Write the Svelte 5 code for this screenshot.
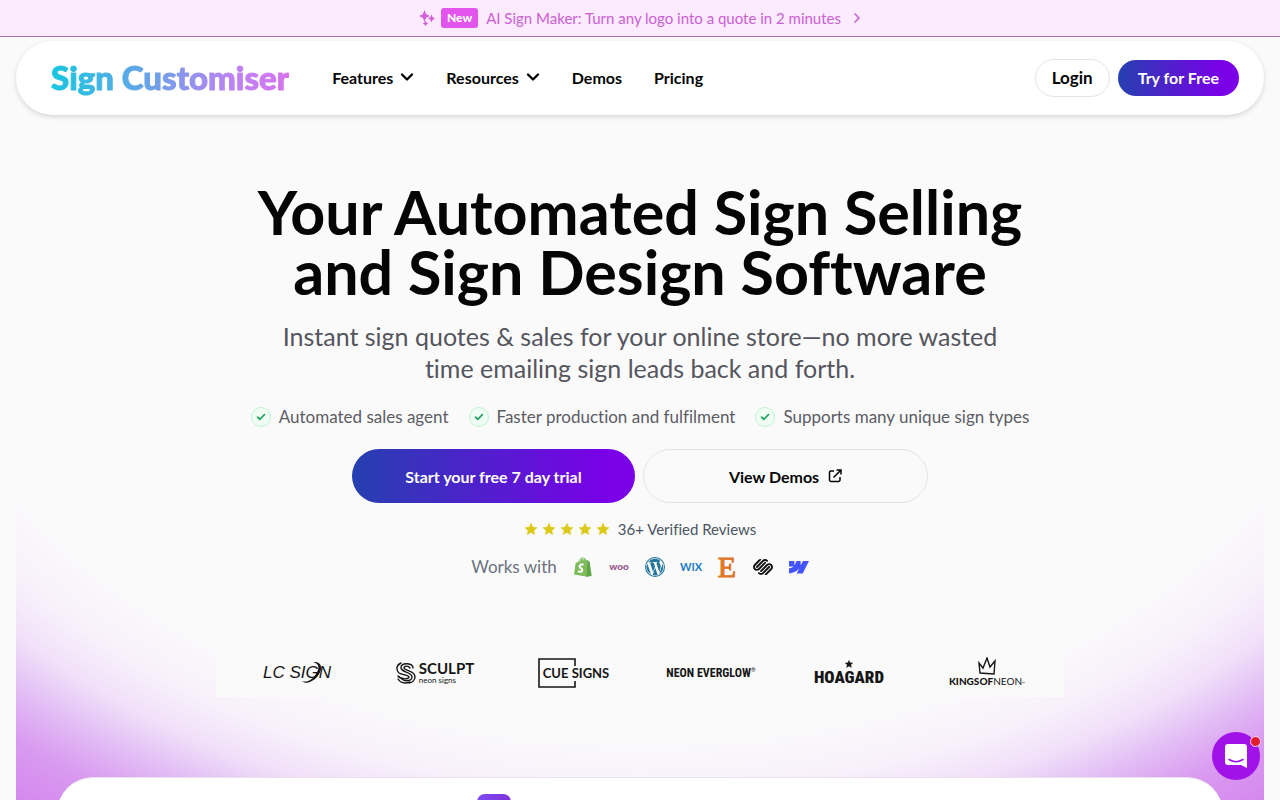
<script lang="ts">
  const menu = [
    { label: 'Features', href: '#features', dropdown: true },
    { label: 'Resources', href: '#resources', dropdown: true },
    { label: 'Demos', href: '#demos', dropdown: false },
    { label: 'Pricing', href: '#pricing', dropdown: false },
  ];

  const benefits = [
    'Automated sales agent',
    'Faster production and fulfilment',
    'Supports many unique sign types',
  ];

  const stars = [1, 2, 3, 4, 5];
</script>

<div class="page">
  <a class="announcement" href="#sign-maker">
    <svg class="sparkles" width="16" height="16" viewBox="0 0 16 16" aria-hidden="true">
      <path d="M5.500 0 L7.200 4.200 L11 6 L7.200 7.800 L5.500 12 L3.800 7.800 L0 6 L3.800 4.200Z" />
      <path d="M12.500 4.500 L13.700 7.300 L16 8.500 L13.700 9.700 L12.500 12.500 L11.300 9.700 L9 8.500 L11.300 7.300Z" />
      <path d="M6.500 10.800 L7.500 12.500 L9.200 13.500 L7.500 14.500 L6.500 16 L5.500 14.500 L3.800 13.500 L5.500 12.500Z" />
    </svg>
    <span class="new">New</span>
    <span class="announcement-text">AI Sign Maker: Turn any logo into a quote in 2 minutes</span>
    <svg class="arrow" width="8" height="12" viewBox="0 0 8 12" aria-hidden="true">
      <path d="M1.500 1.500 L6 6 L1.500 10.500" />
    </svg>
  </a>

  <header class="header">
    <a class="logo" href="#home">Sign Customiser</a>
    <nav class="nav" aria-label="Main">
      {#each menu as item}
        {#if item.dropdown}
          <button class="nav-item" type="button" aria-haspopup="true">
            {item.label}
            <svg width="14" height="10" viewBox="0 0 14 10" aria-hidden="true">
              <path d="M2 2.500 L7 7.500 L12 2.500" />
            </svg>
          </button>
        {:else}
          <a class="nav-item" href={item.href}>{item.label}</a>
        {/if}
      {/each}
    </nav>
    <div class="account">
      <a class="login" href="#login">Login</a>
      <a class="try" href="#trial">Try for Free</a>
    </div>
  </header>

  <div class="backdrop">
    <main class="hero">
      <h1>Your Automated Sign Selling<br />and Sign Design Software</h1>
      <p class="lead">Instant sign quotes & sales for your online store—no more wasted<br />time emailing sign leads back and forth.</p>

      <ul class="benefits">
        {#each benefits as benefit}
          <li>
            <span class="tick">
              <svg width="10" height="8" viewBox="0 0 10 8" aria-hidden="true">
                <path d="M1.500 4.200 L3.800 6.400 L8.500 1.500" />
              </svg>
            </span>
            {benefit}
          </li>
        {/each}
      </ul>

      <div class="actions">
        <a class="cta primary" href="#trial">Start your free 7 day trial</a>
        <a class="cta" href="#demos">
          View Demos
          <svg width="14" height="14" viewBox="0 0 14 14" aria-hidden="true">
            <path d="M6 2 H3 A1.500 1.500 0 0 0 1.500 3.500 V11 A1.500 1.500 0 0 0 3 12.500 H10.500 A1.500 1.500 0 0 0 12 11 V8 M8.500 1 H13 V5.500 M13 1 L5.500 8.500" />
          </svg>
        </a>
      </div>

      <div class="reviews">
        <div class="stars" role="img" aria-label="5 stars">
          {#each stars as star (star)}
            <svg width="14" height="14" viewBox="0 0 20 20">
              <path d="M10 1 L12.800 7 L19.400 7.700 L14.500 12.100 L15.900 18.600 L10 15.300 L4.100 18.600 L5.500 12.100 L0.600 7.700 L7.200 7Z" />
            </svg>
          {/each}
        </div>
        <span>36+ Verified Reviews</span>
      </div>

      <div class="works">
        <span>Works with</span>
        <div class="platforms">
          <svg viewBox="0 0 20 20" role="img" aria-label="Shopify">
            <path fill="#7dbb5b" d="M2.700 5.700 L5.300 4.900 C5.800 2.300 7.700 0 9.700 0.200 C10.300 0.200 10.700 0.500 11 1 C12.200 0.800 12.800 2 13.100 2.900 L14.600 3 L14.700 19.800 L1 17.500Z" />
            <path fill="#5fa548" d="M14.500 3 L16.600 4.800 L18.700 18.700 L13.500 20Z" />
            <path fill="none" stroke="#f9fafb" stroke-width="0.800" d="M6.500 4.500 C7 2.500 8.500 0.900 9.600 1 C10.600 1.200 10.800 2.400 10.800 3.400" />
            <path fill="none" stroke="#fff" stroke-width="2" d="M10.500 7.700 C8.500 6.900 6.700 7.700 6.600 9.200 C6.500 11.100 9.600 11.100 9.300 13.300 C9 15.200 6.700 15.200 5 14.100" />
          </svg>
          <svg viewBox="0 0 20 20" role="img" aria-label="Woo">
            <text class="woo" x="10" y="13" text-anchor="middle">woo</text>
          </svg>
          <svg viewBox="0 0 20 20" role="img" aria-label="WordPress">
            <path fill="#21759b" d="M10 0 A10 10 0 1 0 10 20 A10 10 0 1 0 10 0Z M10 1 A9 9 0 1 1 10 19 A9 9 0 1 1 10 1Z" fill-rule="evenodd" />
            <path fill="#21759b" d="M2.200 6.500 L6 17.200 A8.200 8.200 0 0 1 2.200 6.500Z M3 5.600 A8.300 8.300 0 0 1 15.600 4 C14.400 4.100 14 5.300 14.700 6.500 C15.600 8 16 9.300 15.400 11.400 L14.300 14.800 L11.300 6 L12.300 5.800 V5.100 H7.700 V5.800 L8.700 6 L10 9.600 L8.100 15 L5.100 6 L6.200 5.800 V5.100Z M10.100 10.800 L12.700 18 A8.300 8.300 0 0 1 7.800 18Z M17.400 6.200 A8.200 8.200 0 0 1 14.100 17.200 L16.700 9.800 C17.200 8.400 17.500 7.300 17.400 6.200Z" />
          </svg>
          <svg viewBox="0 0 20 20" role="img" aria-label="Wix">
            <text class="wix" x="10" y="14" text-anchor="middle">WIX</text>
          </svg>
          <svg viewBox="0 0 20 20" role="img" aria-label="Etsy">
            <text class="etsy" x="10" y="20" text-anchor="middle">E</text>
          </svg>
          <svg viewBox="0 0 24 24" role="img" aria-label="Squarespace">
            <path fill="#111" d="M22.655 8.719c-1.802-1.801-4.726-1.801-6.564 0l-7.351 7.350c-.45.45-.45 1.200 0 1.650.45.449 1.200.449 1.650 0l7.351-7.351c.899-.899 2.362-.899 3.264 0 .9.9.9 2.364 0 3.264l-7.239 7.239c.9.899 2.362.899 3.263 0l5.589-5.589c1.836-1.838 1.836-4.763.037-6.563zm-2.475 2.437c-.451-.45-1.201-.45-1.650 0l-7.354 7.389c-.9.899-2.361.899-3.262 0-.45-.45-1.200-.45-1.650 0s-.45 1.200 0 1.649c1.801 1.801 4.726 1.801 6.564 0l7.351-7.350c.449-.487.449-1.239.001-1.688zm-2.439-7.350c-1.801-1.801-4.726-1.801-6.564 0l-7.351 7.351c-.45.449-.45 1.199 0 1.649s1.200.45 1.650 0l7.395-7.351c.9-.899 2.371-.899 3.270 0 .451.45 1.201.45 1.650 0 .421-.487.421-1.199-.05-1.649zm-2.475 2.475c-.45-.449-1.200-.449-1.650 0l-7.351 7.351c-.899.9-2.363.9-3.265 0-.9-.9-.9-2.364 0-3.264l7.239-7.239c-.9-.9-2.362-.9-3.263 0L1.350 8.719c-1.800 1.800-1.800 4.725 0 6.563 1.801 1.801 4.725 1.801 6.564 0l7.350-7.351c.451-.488.451-1.238.002-1.650z" />
          </svg>
          <svg viewBox="0 0 20 20" role="img" aria-label="Webflow">
            <path fill="#4353ff" d="M20 4 L13.700 16.400 H7.700 L10.300 11.300 C8.100 14.200 4.800 16.100 0 16.400 V11.200 C3 11 4.700 9.400 4.700 9.400 H0 V4 H5.400 V8.400 L7.600 4 H11.600 V8.400 L13.900 4Z" />
          </svg>
        </div>
      </div>

      <div class="customers">
        <div class="lc">
          <svg width="68" height="24" viewBox="0 0 68 24" aria-hidden="true">
            <path d="M50 1 C61 0 60 11 52 18 C47 22 42 23 39 20 C44 22 49 19 53 13 C57 6 56 3 50 1Z" />
          </svg>
          <span>LC SIGN</span>
        </div>
        <div class="sculpt">
          <svg width="20" height="22" viewBox="0 0 20 22" aria-hidden="true">
            <path d="M17 6 C17 1 6 0 5 5 C4 11 16 9 16 15 C16 19 9 20 6 17" />
            <path d="M14 6 C12 3 8 4 8 6 C8 9 19 8 19 15 C19 18 16 21 13 21" />
            <path d="M5 1 C0 3 0 8 3 11 C6 13 13 13 13 15 C12 18 4 17 2 14 M2 17 C5 22 11 21 14 20" />
          </svg>
          <div class="sculpt-name"><b>SCULPT</b><span>neon signs</span></div>
        </div>
        <div class="cue">
          <svg width="70" height="30" viewBox="0 0 70 30" aria-hidden="true">
            <path d="M37 8 V1 H1 V29 H37 V23" />
          </svg>
          <b>CUE SIGNS</b>
        </div>
        <div class="everglow">NEON EVERGLOW<sup>®</sup></div>
        <div class="hoagard">
          <svg width="8" height="8" viewBox="0 0 20 20" aria-hidden="true">
            <path d="M10 1 L12.800 7 L19.400 7.700 L14.500 12.100 L15.900 18.600 L10 15.300 L4.100 18.600 L5.500 12.100 L0.600 7.700 L7.200 7Z" />
          </svg>
          <b>HOAGARD</b>
        </div>
        <div class="kings">
          <svg width="18" height="18" viewBox="0 0 18 18" aria-hidden="true">
            <path d="M2 16 L1 6 L5 11 L9 1 L12 10 L17 4 L16 17 Z" />
          </svg>
          <div><b>KINGSOF</b>NEON<small>™</small></div>
        </div>
      </div>
    </main>

    <section class="preview" aria-label="Product preview">
      <div class="preview-icon"></div>
    </section>
  </div>

  <button class="chat" type="button" aria-label="Open chat">
    <svg width="22" height="24" viewBox="0 0 22 24" aria-hidden="true">
      <path fill="#fff" d="M3 0 H19 Q22 0 22 3 V24 L16 21 H3 Q0 21 0 18 V3 Q0 0 3 0Z" />
      <path fill="none" stroke="#a012e8" stroke-width="1.600" stroke-linecap="round" d="M4 15.500 Q11 20 18 15.500" />
    </svg>
    <span class="unread"></span>
  </button>
</div>

<style>
  :global(body) {
    background: #fafafa;
    overflow: hidden;
  }

  .page {
    height: 100vh;
    min-height: 600px;
    display: flex;
    flex-direction: column;
    overflow: hidden;
    font-family: Lato, 'Open Sans', sans-serif;
    font-variant-ligatures: no-common-ligatures;
    color: #050505;
    background: #fafafa;
  }

  a {
    color: inherit;
    text-decoration: none;
  }

  button {
    font: inherit;
    color: inherit;
    border: 0;
    padding: 0;
    background: none;
    cursor: pointer;
  }

  svg {
    display: block;
    flex-shrink: 0;
  }

  .announcement {
    display: flex;
    align-items: center;
    justify-content: center;
    height: 36px;
    flex-shrink: 0;
    border-bottom: 1px solid #b36bbf;
    background: #fceaff;
    color: #ca61d3;
    font-size: 15px;
    line-height: 20px;
  }

  .sparkles {
    fill: #d45fdc;
    margin-right: 6px;
  }

  .new {
    padding: 0 6px;
    border-radius: 3px;
    background: #e354ec;
    color: #fff;
    font-size: 12px;
    font-weight: 900;
  }

  .announcement-text {
    margin: 0 12px 0 8px;
  }

  .arrow {
    fill: none;
    stroke: #ca61d3;
    stroke-width: 1.5;
  }

  .header {
    position: relative;
    z-index: 1;
    display: flex;
    align-items: center;
    flex-shrink: 0;
    height: 74px;
    margin: 4px 16px 0;
    padding: 0 25px 0 35px;
    box-sizing: border-box;
    border-radius: 37px;
    background: #fff;
    box-shadow: 0 2px 5px #00000026;
  }

  .logo {
    padding-bottom: 2px;
    font-family: 'Lato Black', Lato, sans-serif;
    font-size: 33px;
    font-weight: 900;
    line-height: 44px;
    background: linear-gradient(90deg, #17c7df, #719fe9 45%, #ba83f4 75%, #d774ef);
    background-clip: text;
    color: transparent;
    -webkit-text-stroke: 1px transparent;
  }

  .nav {
    display: flex;
    gap: 32px;
    margin-left: 43px;
    padding-bottom: 2px;
  }

  .nav-item {
    display: flex;
    align-items: center;
    gap: 7px;
    font-size: 16px;
    font-weight: 700;
  }

  .nav-item svg {
    fill: none;
    stroke: #050505;
    stroke-width: 2.4;
    stroke-linecap: round;
    stroke-linejoin: round;
  }

  .account {
    display: flex;
    align-items: center;
    gap: 8px;
    margin-left: auto;
    font-size: 16px;
    font-weight: 700;
    line-height: 36px;
  }

  .login {
    padding: 0 16px;
    border: 1px solid #e4e4e7;
    border-radius: 20px;
    font-size: 17px;
  }

  .try {
    padding: 0 20px;
    border-radius: 18px;
    color: #fff;
    background: linear-gradient(90deg, #2540b0, #7a00e8 85%);
  }

  .backdrop {
    display: flex;
    flex: 1;
    flex-direction: column;
    margin: 0 16px;
    background: radial-gradient(
      61% 530px at 50% 125px,
      #fafafa 94%,
      #f8f0fb 104%,
      #f0dff9 111%,
      #e2bcf5 118%,
      #d99af0 125%,
      #d487ee 134%
    );
  }

  .hero {
    display: flex;
    flex-direction: column;
    align-items: center;
    flex-shrink: 0;
    padding-top: 67px;
    text-align: center;
  }

  h1 {
    margin: 0;
    font-size: 61px;
    font-weight: 700;
    line-height: 60px;
  }

  .lead {
    margin: 18px 0 0;
    font-size: 25px;
    line-height: 32px;
    color: #55555e;
  }

  .benefits {
    display: flex;
    gap: 20px;
    margin: 21px 0 0;
    padding: 0;
    list-style: none;
    font-size: 17px;
    line-height: 24px;
    color: #5c5c65;
  }

  .benefits li {
    display: flex;
    align-items: center;
    gap: 8px;
  }

  .tick {
    display: grid;
    place-items: center;
    width: 18px;
    height: 18px;
    border: 1px solid #bdf5d0;
    border-radius: 50%;
    background: #effdf4;
  }

  .tick svg {
    fill: none;
    stroke: #16a05a;
    stroke-width: 1.6;
    stroke-linecap: round;
  }

  .actions {
    display: flex;
    gap: 8px;
    margin-top: 20px;
    font-size: 16px;
    font-weight: 700;
  }

  .cta {
    display: flex;
    align-items: center;
    justify-content: center;
    gap: 9px;
    width: 283px;
    height: 52px;
    border: 1px solid #e4e4e7;
    border-radius: 28px;
  }

  .cta.primary {
    height: 54px;
    border: 0;
    color: #fff;
    background: linear-gradient(90deg, #2540b0, #7a00e8 90%);
  }

  .cta svg {
    fill: none;
    stroke: #050505;
    stroke-width: 1.5;
  }

  .reviews {
    display: flex;
    align-items: center;
    gap: 8px;
    margin-top: 16px;
    font-size: 15px;
    line-height: 20px;
    color: #4b5563;
  }

  .stars {
    display: flex;
    gap: 4px;
  }

  .stars svg {
    fill: #dcc918;
  }

  .works {
    display: flex;
    align-items: center;
    gap: 16px;
    margin-top: 16px;
    font-size: 17px;
    line-height: 24px;
    color: #6b7280;
  }

  .platforms {
    display: flex;
    gap: 16px;
  }

  .platforms svg {
    width: 20px;
    height: 20px;
    overflow: visible;
  }

  .woo {
    fill: #96588a;
    font-size: 10px;
    font-weight: 900;
  }

  .wix {
    fill: #207bc8;
    font-size: 11px;
    font-weight: 700;
  }

  .etsy {
    fill: #df7526;
    stroke: #df7526;
    font-family: 'Liberation Serif', serif;
    font-size: 30px;
  }

  .customers {
    display: grid;
    grid-template-columns: repeat(6, 1fr);
    place-items: center;
    box-sizing: border-box;
    width: 848px;
    max-width: 100%;
    height: 48px;
    margin: 70px 0 80px;
    padding: 0 8px 0 12px;
    color: #161616;
    background: #fafafa;
  }

  .customers svg {
    fill: none;
    stroke: #161616;
  }

  .lc,
  .cue {
    display: grid;
    place-items: center;
  }

  .lc svg,
  .lc span,
  .cue svg,
  .cue b {
    grid-area: 1 / 1;
  }

  .lc svg {
    fill: #161616;
    stroke: none;
  }

  .lc span {
    font-family: 'Liberation Sans', sans-serif;
    font-size: 17px;
    font-style: italic;
    line-height: 20px;
  }

  .sculpt {
    display: flex;
    align-items: center;
    gap: 3px;
    text-align: left;
  }

  .sculpt svg {
    stroke-width: 1.4;
    stroke-linecap: round;
  }

  .sculpt-name {
    display: flex;
    flex-direction: column;
  }

  .sculpt-name b {
    font-size: 15px;
    line-height: 15px;
  }

  .sculpt-name span {
    font-size: 8px;
    line-height: 9px;
  }

  .cue svg {
    stroke-width: 1.6;
  }

  .cue b {
    padding-left: 6px;
    font-size: 13px;
  }

  .everglow {
    font-family: 'Liberation Sans Narrow', 'Roboto Condensed', Roboto, sans-serif;
    font-size: 12px;
    font-weight: 700;
    white-space: nowrap;
  }

  .everglow sup {
    font-size: 6px;
  }

  .hoagard {
    display: flex;
    flex-direction: column;
    align-items: center;
    font-family: 'Liberation Sans Narrow', 'Roboto Condensed', Roboto, sans-serif;
    font-size: 17px;
    line-height: 18px;
  }

  .hoagard b {
    font-weight: 900;
  }

  .hoagard svg {
    fill: #161616;
  }

  .kings {
    display: flex;
    flex-direction: column;
    align-items: center;
    font-size: 10px;
    line-height: 12px;
  }

  .kings b {
    font-weight: 900;
  }

  .kings small {
    font-size: 4px;
  }

  .kings svg {
    stroke-width: 1.4;
  }

  .preview {
    flex: 1;
    margin: 0 41px;
    border-top: 1px solid #e9e2ec;
    border-radius: 36px 36px 0 0;
    background: #fff;
  }

  .preview-icon {
    width: 34px;
    height: 34px;
    margin: 16px 0 0 36%;
    border-radius: 8px;
    background: linear-gradient(90deg, #7c4df0, #8132dc);
  }

  .chat {
    position: fixed;
    right: 20px;
    bottom: 20px;
    z-index: 2;
    display: grid;
    place-items: center;
    width: 48px;
    height: 48px;
    border-radius: 50%;
    background: #a012e8;
  }

  .unread {
    position: absolute;
    top: 4px;
    right: -1px;
    width: 9px;
    height: 9px;
    border: 1px solid #f7d9f9;
    border-radius: 50%;
    background: #e11d2e;
  }
</style>
